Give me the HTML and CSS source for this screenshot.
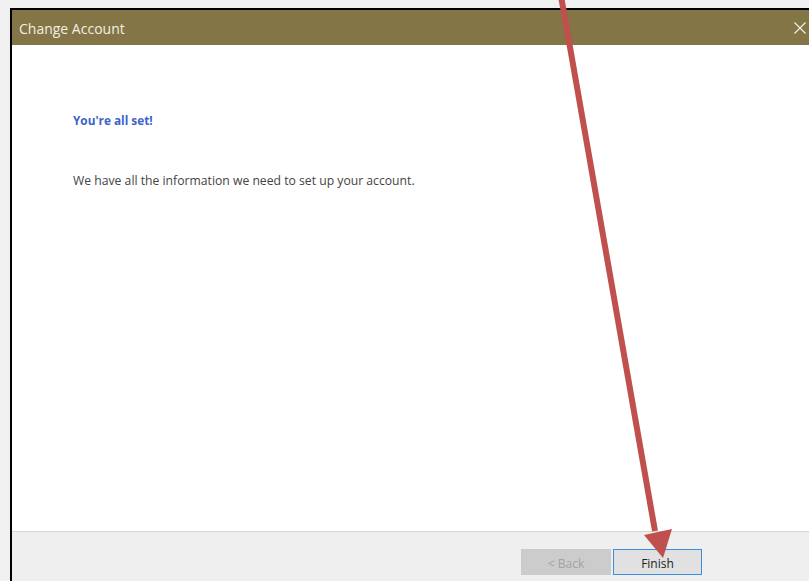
FILE: index.html
```html
<!DOCTYPE html>
<html lang="en">
<head>
<meta charset="utf-8">
<title>Change Account</title>
<link rel="stylesheet" href="styles.css">
</head>
<body>
<div class="window">
  <div class="titlebar">
    <span class="title">Change Account</span>
    <svg class="close" width="12" height="12" viewBox="0 0 12 12" aria-hidden="true">
      <path d="M0.5 0.5 L11.5 11.5 M11.5 0.5 L0.5 11.5" stroke="#f2efe4" stroke-width="1.2" fill="none"/>
    </svg>
  </div>
  <div class="content">
    <p class="heading">You're all set!</p>
    <p class="message">We have all the information we need to set up your account.</p>
  </div>
  <div class="footer">
    <button class="btn btn-disabled" disabled>&lt; Back</button>
    <button class="btn btn-default">Finish</button>
  </div>
</div>

<!-- callout arrow pointing to the Finish button -->
<svg class="callout" width="809" height="581" viewBox="0 0 809 581" aria-hidden="true">
  <line x1="561" y1="-4" x2="655" y2="531" stroke="#c0504d" stroke-width="6"/>
  <polygon points="644,535 672,529 663,558" fill="#c0504d"/>
</svg>
</body>
</html>
```
FILE: styles.css
```css
html, body {
  margin: 0;
  padding: 0;
}

body {
  background: #f0f0f0;
  width: 809px;
  height: 581px;
  overflow: hidden;
  position: relative;
  font-family: "Open Sans", "Noto Sans", sans-serif;
}

.window {
  margin: 8px 0 0 10px;
  width: 820px;
  height: 600px;
  border-top: 2px solid #000;
  border-left: 2px solid #000;
  display: flex;
  flex-direction: column;
  background: #fff;
}

.titlebar {
  height: 35px;
  flex: none;
  background: #837545;
  display: flex;
  align-items: center;
  padding-left: 7px;
  padding-right: 15px;
  color: #f2efe4;
}

.title {
  font-size: 14px;
  flex: 1;
  padding-top: 1px;
}

.close {
  display: block;
  margin-right: 11px;
}

.content {
  height: 487px;
  flex: none;
  background: #fff;
  padding: 0 0 0 61px;
  box-sizing: border-box;
  border-bottom: 1px solid #d6d6d6;
}

.heading {
  margin: 67px 0 0;
  font-size: 11.8px;
  font-weight: bold;
  color: #3c63c8;
}

.message {
  margin: 44px 0 0;
  font-size: 12.2px;
  color: #444;
}

.footer {
  flex: 1;
  background: #efefef;
  display: flex;
  align-items: flex-start;
  padding: 17px 0 0 509px;
  gap: 2px;
}

.btn {
  width: 90px;
  height: 26px;
  font-family: inherit;
  font-size: 12px;
  padding: 2px 0 0;
  margin: 0;
}

.btn-disabled {
  background: #cccccc;
  border: 1px solid #cccccc;
  color: #a2a2a2;
}

.btn-default {
  width: 89px;
  background: #e1e1e1;
  border: 1px solid #3b8ee0;
  color: #222;
}

.callout {
  position: absolute;
  left: 0;
  top: 0;
  pointer-events: none;
}
```
